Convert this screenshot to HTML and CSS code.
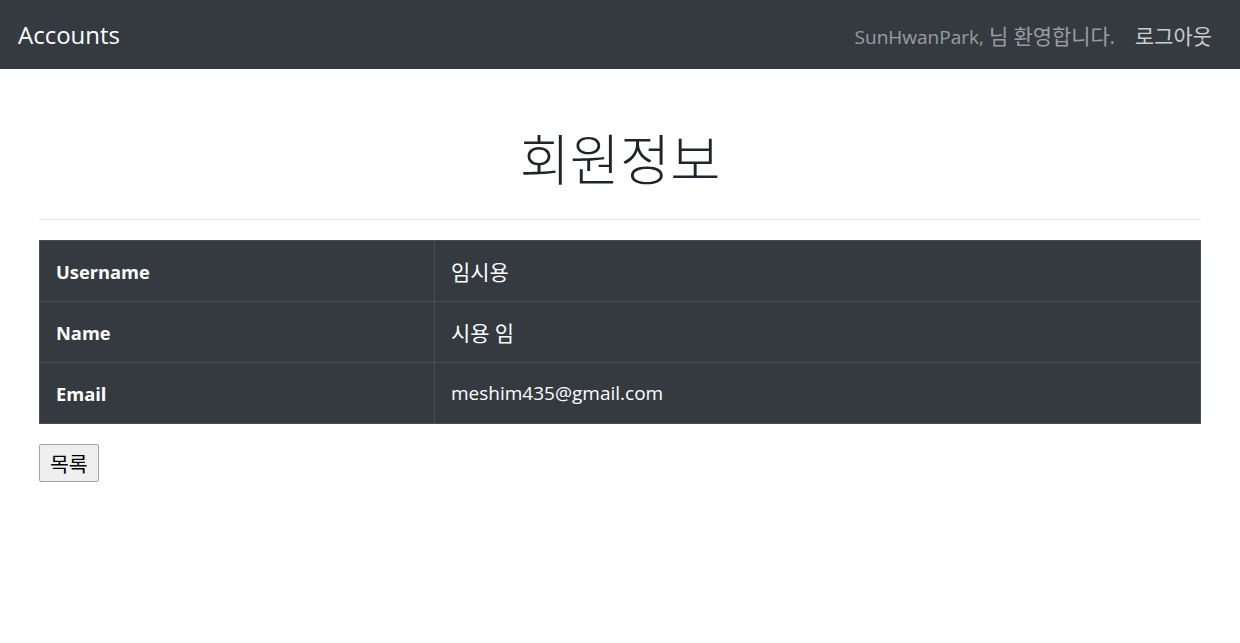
FILE: index.html
```html
<!DOCTYPE html>
<html lang="ko">
<head>
<meta charset="utf-8">
<title>회원정보</title>
<link rel="stylesheet" href="styles.css">
</head>
<body>
<nav class="navbar">
  <a class="brand" href="#">Accounts</a>
  <div class="nav-right">
    <span class="welcome">SunHwanPark, <span class="ko">님 환영합니다.</span></span>
    <a class="logout ko" href="#">로그아웃</a>
  </div>
</nav>
<main class="content">
  <h1 class="title">회원정보</h1>
  <hr class="divider">
  <table class="info">
    <tr><th>Username</th><td><span class="ko">임시용</span></td></tr>
    <tr><th>Name</th><td><span class="ko">시용 임</span></td></tr>
    <tr><th>Email</th><td>meshim435@gmail.com</td></tr>
  </table>
  <button class="list-btn" type="button">목록</button>
</main>
</body>
</html>
```

FILE: styles.css
```css
html, body {
  margin: 0;
  padding: 0;
}
body {
  font-family: "Open Sans", "Noto Sans CJK KR", sans-serif;
  color: #212529;
  background: #fff;
}
.ko {
  font-size: 1.1em;
}
.navbar {
  height: 69px;
  background: #343a40;
  display: flex;
  align-items: center;
  justify-content: space-between;
  padding: 0 28px 0 18px;
  box-sizing: border-box;
}
.brand {
  color: #fff;
  text-decoration: none;
  font-size: 24px;
  line-height: 1;
}
.nav-right {
  display: flex;
  align-items: center;
  gap: 20px;
  font-size: 19px;
}
.welcome {
  color: rgba(255, 255, 255, 0.5);
}
.logout {
  color: rgba(255, 255, 255, 0.75);
  text-decoration: none;
}
.content {
  padding: 0 39px;
}
.title {
  margin: 0;
  padding-top: 52px;
  text-align: center;
  font-size: 54.5px;
  font-weight: 300;
  line-height: 76px;
}
.divider {
  margin: 22px 0 20px;
  border: 0;
  border-top: 1px solid #e5e5e5;
}
.info {
  width: 100%;
  border-collapse: collapse;
  background: #343a40;
  color: #fff;
  font-size: 19px;
  border: 1px solid #454d55;
}
.info th, .info td {
  height: 61px;
  padding: 0 16px;
  text-align: left;
  border-top: 1px solid #454d55;
  box-sizing: border-box;
}
.info th {
  width: 395px;
  font-size: 18.3px;
  font-weight: 700;
  border-right: 1px solid #454d55;
}
.list-btn {
  margin-top: 20px;
  height: 38px;
  padding: 0 10px;
  font-family: "Open Sans", "Noto Sans CJK KR", sans-serif;
  font-size: 20.5px;
  color: #000;
  background: #efefef;
  border: 1px solid #a5a5a5;
  border-radius: 2px;
}
```
